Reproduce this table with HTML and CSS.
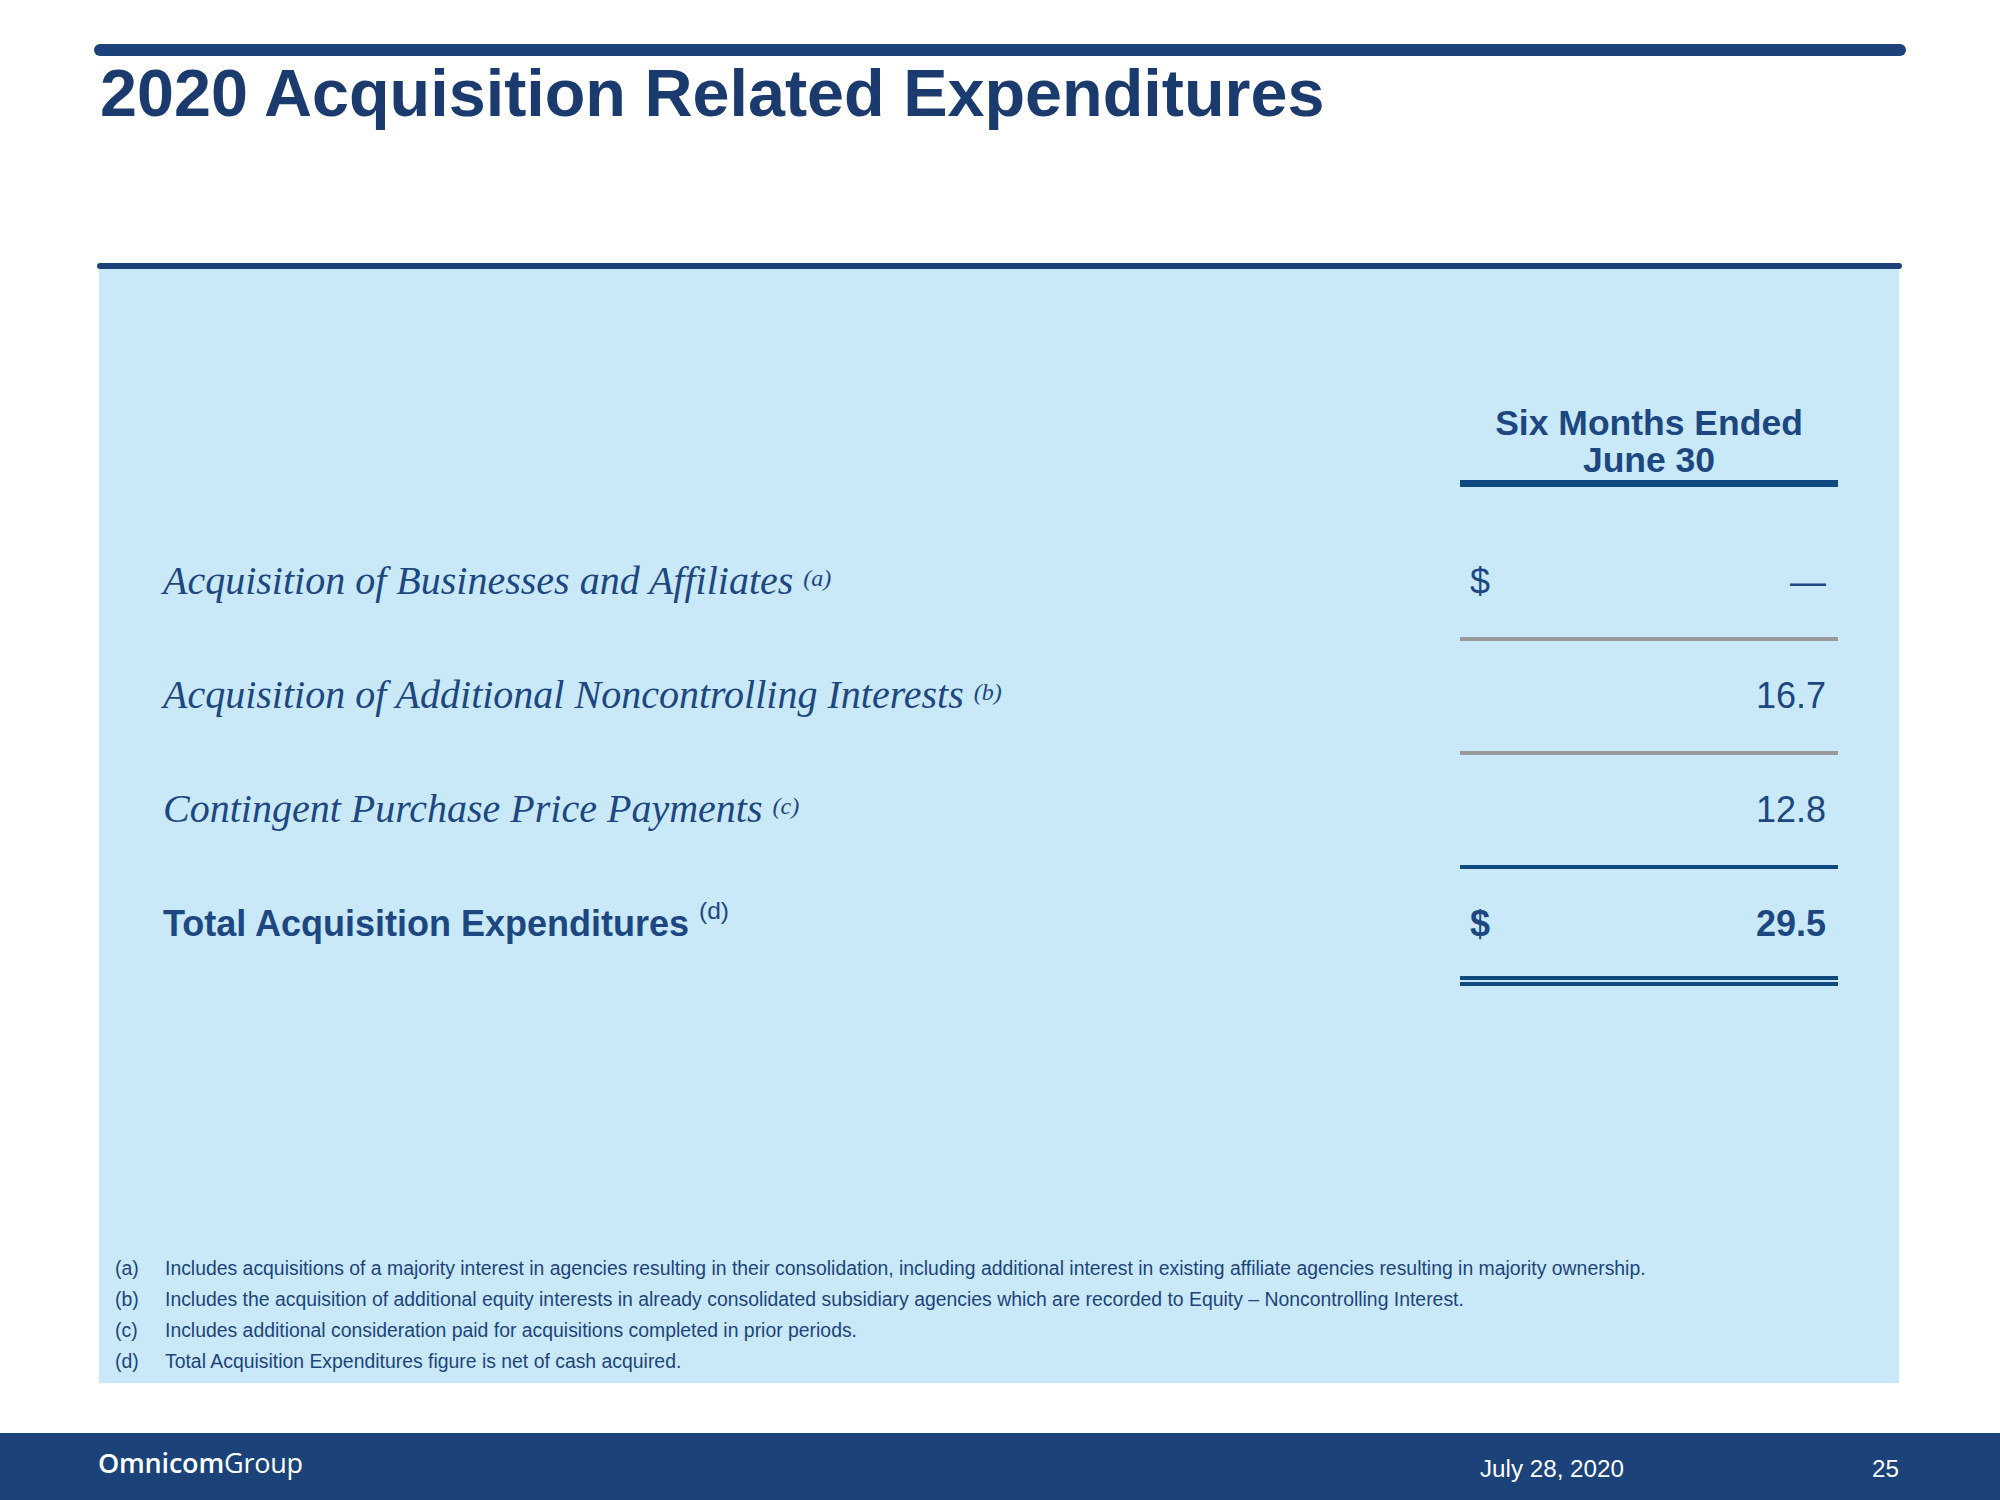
FILE: index.html
```html
<!DOCTYPE html>
<html lang="en">
<head>
<meta charset="utf-8">
<title>2020 Acquisition Related Expenditures</title>
<link rel="stylesheet" href="styles.css">
</head>
<body>
<div class="slide">
  <div class="top-rule"></div>
  <h1 class="title">2020 Acquisition Related Expenditures</h1>
  <div class="panel-rule"></div>
  <section class="panel">
    <div class="table">
      <div class="row head-row">
        <div class="label"></div>
        <div class="col-head">Six Months Ended<br>June 30</div>
      </div>
      <div class="row">
        <div class="label italic">Acquisition of Businesses and Affiliates <span class="sup-i">(a)</span></div>
        <div class="value line-gray"><span class="cur">$</span><span class="amt">—</span></div>
      </div>
      <div class="row">
        <div class="label italic">Acquisition of Additional Noncontrolling Interests <span class="sup-i">(b)</span></div>
        <div class="value line-gray"><span class="amt">16.7</span></div>
      </div>
      <div class="row">
        <div class="label italic">Contingent Purchase Price Payments <span class="sup-i">(c)</span></div>
        <div class="value line-blue"><span class="amt">12.8</span></div>
      </div>
      <div class="row total-row">
        <div class="label total">Total Acquisition Expenditures<span class="sup-d">(d)</span></div>
        <div class="double-wrap">
          <div class="value total-value"><span class="cur">$</span><span class="amt">29.5</span></div>
        </div>
      </div>
    </div>
    <div class="notes">
      <div class="note"><span class="mark">(a)</span><span>Includes acquisitions of a majority interest in agencies resulting in their consolidation, including additional interest in existing affiliate agencies resulting in majority ownership.</span></div>
      <div class="note"><span class="mark">(b)</span><span>Includes the acquisition of additional equity interests in already consolidated subsidiary agencies which are recorded to Equity – Noncontrolling Interest.</span></div>
      <div class="note"><span class="mark">(c)</span><span>Includes additional consideration paid for acquisitions completed in prior periods.</span></div>
      <div class="note"><span class="mark">(d)</span><span>Total Acquisition Expenditures figure is net of cash acquired.</span></div>
    </div>
  </section>
  <footer class="footer">
    <div class="logo"><span class="logo-bold">Omnicom</span><span class="logo-reg">Group</span></div>
    <div class="date">July 28, 2020</div>
    <div class="page">25</div>
  </footer>
</div>
</body>
</html>
```
FILE: styles.css
```css
html, body {
  margin: 0;
  padding: 0;
  background: #ffffff;
}

.slide {
  width: 2000px;
  height: 1500px;
  display: flex;
  flex-direction: column;
  font-family: "Liberation Sans", Arial, sans-serif;
  overflow: hidden;
}

.top-rule {
  height: 12px;
  margin: 44px 94px 0 94px;
  background: #1d4279;
  border-radius: 6px;
}

.title {
  margin: 2px 0 0 100px;
  font-family: "Liberation Sans", Arial, sans-serif;
  font-weight: bold;
  font-size: 66.5px;
  line-height: 70px;
  color: #1b3b6f;
}

.panel-rule {
  height: 6px;
  margin: 135px 98px 0 97px;
  background: #1d4279;
  border-radius: 3px;
}

.panel {
  margin: 0 101px 0 99px;
  height: 1114px;
  box-sizing: border-box;
  background: #c9e9f9;
  display: flex;
  flex-direction: column;
  padding: 136px 0 6px 0;
  color: #1d4780;
}

.table {
  padding: 0 61px 0 64px;
}

.row {
  display: grid;
  grid-template-columns: 1fr 378px;
  align-items: baseline;
}

.head-row {
  margin-bottom: 40px;
  align-items: end;
}

.col-head {
  text-align: center;
  font-weight: bold;
  font-size: 35.5px;
  line-height: 37px;
  padding-bottom: 1px;
  border-bottom: 7px solid #0f4a7f;
  color: #1d4780;
}

.label {
  white-space: nowrap;
}

.italic {
  font-family: "Liberation Serif", "Times New Roman", serif;
  font-style: italic;
  font-size: 40px;
  line-height: 44px;
  color: #1d4780;
}

.sup-i {
  font-size: 24px;
  vertical-align: 8px;
}

.total {
  font-weight: bold;
  font-size: 36px;
  line-height: 44px;
}

.sup-d {
  font-weight: normal;
  font-size: 24.5px;
  vertical-align: 17px;
  margin-left: 10px;
}

.value {
  display: flex;
  align-items: baseline;
  font-size: 36px;
  line-height: 44px;
  padding: 32.5px 12px 33.5px 10px;
}

.amt {
  margin-left: auto;
}

.line-gray {
  border-bottom: 4px solid #999999;
}

.line-blue {
  border-bottom: 4px solid #0f4a7f;
}

.double-wrap {
  padding-bottom: 2px;
  border-bottom: 4px solid #0f4a7f;
}

.total-value {
  font-weight: bold;
  padding-bottom: 30.5px;
  border-bottom: 4px solid #0f4a7f;
}

.notes {
  margin-top: auto;
  padding-left: 16px;
  font-size: 19.4px;
  line-height: 31px;
  color: #1d4479;
}

.note {
  display: grid;
  grid-template-columns: 50px 1fr;
  white-space: nowrap;
}

.footer {
  margin-top: auto;
  height: 67px;
  flex: none;
  background: #1b4379;
  color: #ffffff;
  display: grid;
  grid-template-columns: 1382px 1fr auto;
  align-items: start;
  padding: 0 101px 0 98px;
}

.logo {
  padding-top: 15px;
  font-family: "Open Sans", sans-serif;
  font-size: 27px;
  line-height: 30px;
  letter-spacing: -0.2px;
}

.logo-bold {
  font-weight: 600;
}

.logo-reg {
  font-weight: 400;
}

.date,
.page {
  padding-top: 20.7px;
  font-family: "Liberation Sans", Arial, sans-serif;
  font-size: 24.2px;
  line-height: 30px;
}
```
